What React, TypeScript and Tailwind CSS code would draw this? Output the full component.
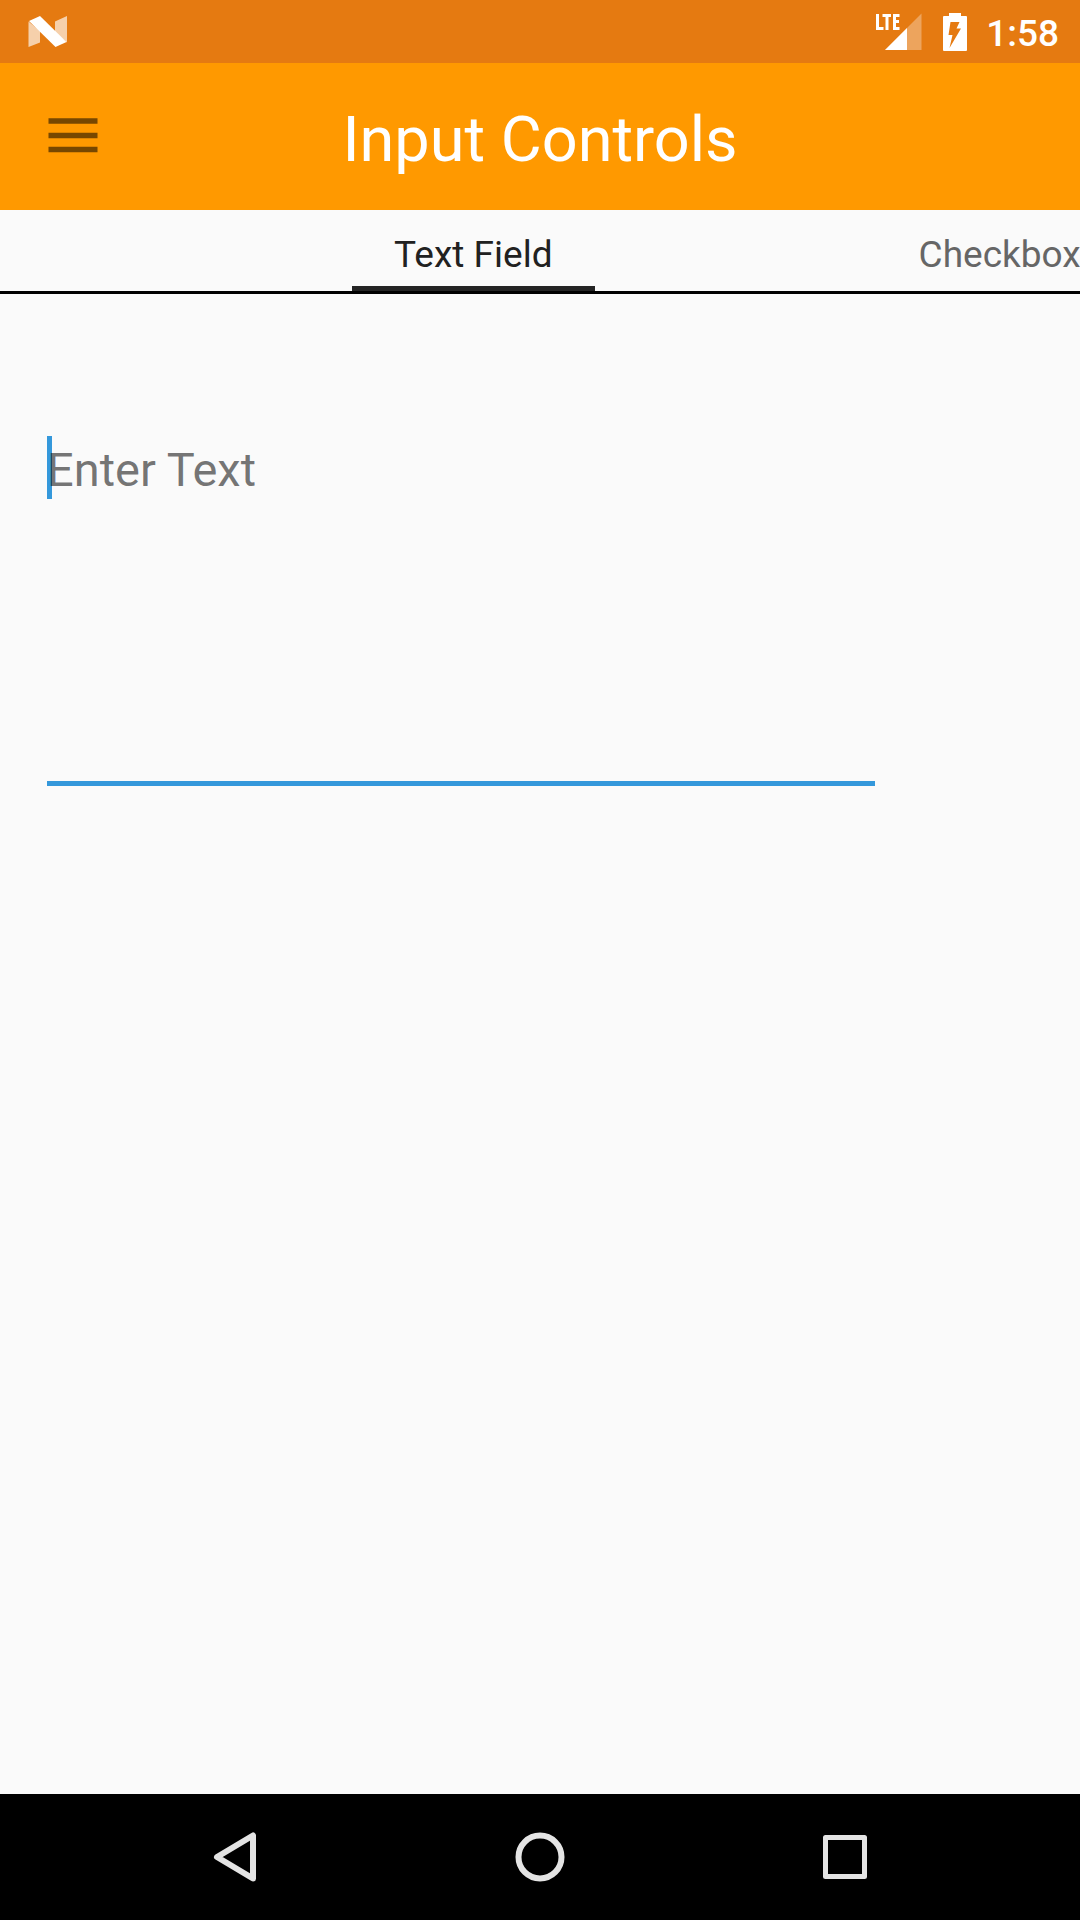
import React from "react";

function StatusBar() {
  return (
    <div className="flex h-[63px] items-center justify-between bg-[#e57a11] pr-[21px] pl-7 text-white">
      <svg width="40" height="32" viewBox="0 0 40 32" fill="currentColor" role="img" aria-label="Android">
        <path d="M0.5 5.5 12 15v11.5L0.5 31z" opacity=".65" />
        <path d="M27 5.5 39 0v26.5L27 17z" opacity=".65" />
        <path d="M1 5 12 0 38.5 26 27.500 31z" />
      </svg>
      <div className="flex items-center">
        <svg width="46" height="38" viewBox="0 0 46 38" fill="currentColor" role="img" aria-label="LTE signal">
          <path d="M45.5 0.5V37H9z" opacity=".32" />
          <path d="M31 15V37H9z" />
          <g fill="none" stroke="currentColor" strokeWidth="3">
            <path d="M1.5 1V15.500H7.5" />
            <path d="M6.500 2.5H15M11 2V17" />
            <path d="M23.5 2.5H18.500V15.5H23.5M18.5 8.500H23" />
          </g>
        </svg>
        <svg className="ml-[21px]" width="24" height="38" viewBox="0 0 24 38" fill="currentColor" role="img" aria-label="Battery charging">
          <path
            fillRule="evenodd"
            d="M6 0H18V3H23Q24 3 24 4V37Q24 38 23 38H1Q0 38 0 37V4Q0 3 1 3H6ZM7.5 9L5.5 22H9.500L6.500 35L18 15.500H13.500L16.500 9Z"
          />
        </svg>
        <time className="ml-[19px] pt-1 text-[37px] leading-none font-medium">1:58</time>
      </div>
    </div>
  );
}

function AppBar() {
  return (
    <header className="grid h-[147px] grid-cols-[1fr_auto_1fr] items-center bg-[#ff9900]">
      <button type="button" aria-label="Open menu" className="ml-12 w-[50px] pb-1 text-[#774700]">
        <svg width="50" height="36" viewBox="0 0 50 36" stroke="currentColor" strokeWidth="5.5">
          <path d="M0.5 4H49.5M0.5 18.500H49.5M0.5 32.500H49.5" />
        </svg>
      </button>
      <h1 className="pt-1.5 text-[63px] leading-none text-white">Input Controls</h1>
    </header>
  );
}

function Tabs() {
  return (
    <nav
      role="tablist"
      aria-label="Input controls"
      className="flex h-[84px] gap-[282px] overflow-hidden border-b-[3px] border-black pl-[32.6%] text-[37px] whitespace-nowrap"
    >
      <button
        type="button"
        role="tab"
        aria-selected="true"
        className="h-full shrink-0 border-b-[5px] border-[#242424] px-[42px] pt-3 leading-none text-[#212121]"
      >
        Text Field
      </button>
      <button
        type="button"
        role="tab"
        aria-selected="false"
        className="h-full shrink-0 border-b-[5px] border-transparent px-[42px] pt-3 leading-none text-[#666666]"
      >
        Checkbox
      </button>
    </nav>
  );
}

function TextField() {
  return (
    <div className="relative mt-[142px] mr-[205px] ml-[47px]">
      <span aria-hidden="true" className="absolute top-0 left-0 h-[63px] w-[5px] bg-[#3498db]" />
      <textarea
        aria-label="Enter Text"
        placeholder="Enter Text"
        className="relative block h-[350px] w-full resize-none border-b-[5px] border-[#3498db] bg-transparent pt-1 text-[47px] leading-[60px] text-black/90 caret-transparent outline-none placeholder:text-black/55"
      />
    </div>
  );
}

function NavigationBar() {
  return (
    <nav
      aria-label="System"
      className="flex h-[126px] items-center justify-center bg-black text-[#e4e4e4] *:flex *:h-full *:w-[28.2%] *:items-center *:justify-center"
    >
      <button type="button" aria-label="Back">
        <svg width="60" height="60" viewBox="0 0 60 60" fill="none" stroke="currentColor" strokeWidth="6" strokeLinejoin="round">
          <path d="M12 30 48 8.500V51.500Z" />
        </svg>
      </button>
      <button type="button" aria-label="Home">
        <svg width="60" height="60" viewBox="0 0 60 60" fill="none" stroke="currentColor" strokeWidth="6">
          <circle cx="30" cy="30" r="21.5" />
        </svg>
      </button>
      <button type="button" aria-label="Recent apps">
        <svg width="60" height="60" viewBox="0 0 60 60" fill="none" stroke="currentColor" strokeWidth="5" strokeLinejoin="round">
          <rect x="10.5" y="10.5" width="39" height="39" />
        </svg>
      </button>
    </nav>
  );
}

export default function App() {
  return (
    <div className="flex min-h-screen flex-col bg-[#fafafa] font-[Roboto,sans-serif]">
      <StatusBar />
      <AppBar />
      <Tabs />
      <main className="flex-1">
        <TextField />
      </main>
      <NavigationBar />
    </div>
  );
}
